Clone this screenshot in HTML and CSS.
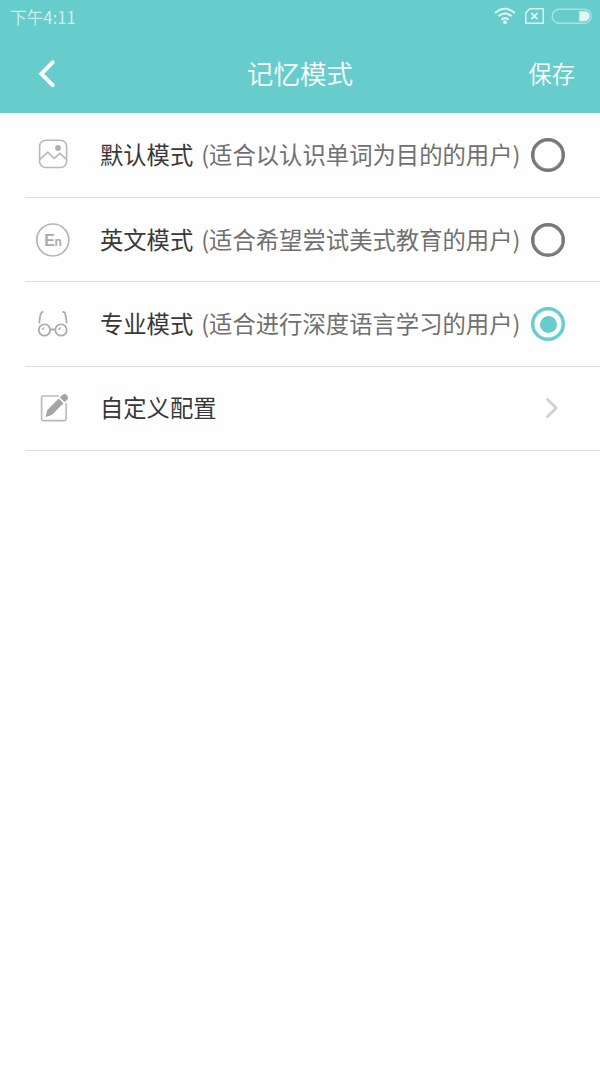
FILE: index.html
```html
<!DOCTYPE html>
<html lang="zh-CN">
<head>
<meta charset="utf-8">
<title>记忆模式</title>
<link rel="stylesheet" href="styles.css">
</head>
<body>
<header class="header">
  <div class="status">
    <span class="time">下午4:11</span>
    <svg class="status-icons" width="100" height="20" viewBox="0 0 100 20" fill="none" stroke="#e0f5f4">
      <path d="M.1 6.2Q10 -2.2 19.9 6.2M3.4 9.5Q10 4 16.6 9.5M6.4 12.9Q10 9.8 13.6 12.9" transform="translate(0 2.8)" stroke-width="2"/>
      <circle cx="10" cy="18.2" r="1.9" fill="#e0f5f4" stroke="none"/>
      <path d="M34.8 4.8H48.2V19.2H30.8V8.7Z" stroke-width="1.4"/>
      <path d="M36.4 9.2l6 6M42.4 9.2l-6 6" stroke-width="1.8"/>
      <rect x="57.2" y="5.2" width="39" height="14" rx="7" stroke="#a9e2e0" stroke-width="1.4"/>
      <path d="M84.3 7.2h5.4a5 5 0 0 1 0 10h-5.4z" fill="#e0f5f4" stroke="none"/>
    </svg>
  </div>
  <div class="navbar">
    <svg class="back" width="20" height="30" viewBox="0 0 20 30" fill="none" stroke="#fff" stroke-width="4" stroke-linecap="round" stroke-linejoin="miter"><path d="M15.6 3.3L4.4 14.8L15.6 26.2"/></svg>
    <h1 class="title">记忆模式</h1>
    <span class="save">保存</span>
  </div>
</header>
<main class="list">
  <div class="row">
    <svg class="icon" width="36" height="36" viewBox="0 0 36 36" fill="none" stroke="#b8b8b8" stroke-width="1.6"><rect x="4.6" y="3.3" width="27" height="27.2" rx="6"/><path d="M5.1 22.3L12.8 15.2L19.2 21.3L24.9 16.4L31.1 22.2"/><circle cx="23" cy="11" r="2.9" fill="#b0b0b0" stroke="none"/></svg>
    <span class="name">默认模式</span><span class="desc">(适合以认识单词为目的的用户)</span>
    <span class="radio"></span>
  </div>
  <div class="row">
    <svg class="icon" width="36" height="36" viewBox="0 0 36 36"><circle cx="17.8" cy="18" r="16" fill="none" stroke="#b5b5b5" stroke-width="1.7"/><text class="en" x="9.2" y="23.6" font-size="16">E</text><text class="en" x="19.6" y="23.6" font-size="12">n</text></svg>
    <span class="name">英文模式</span><span class="desc">(适合希望尝试美式教育的用户)</span>
    <span class="radio"></span>
  </div>
  <div class="row">
    <svg class="icon" width="36" height="36" viewBox="0 0 36 36" fill="none" stroke="#adadad" stroke-width="1.8"><circle cx="9.5" cy="24" r="5.7"/><circle cx="26" cy="24" r="5.7"/><path d="M15.2 23.5H20.3M4.3 17.4Q4.8 9 6.6 6.3L8.4 5.7M31.6 17.4Q31.1 9 29.3 6.3L27.5 5.7"/><path d="M7.4 24Q7.4 22 9.5 21.9M23.9 24Q23.9 22 26 21.9" stroke-width="1.3"/></svg>
    <span class="name">专业模式</span><span class="desc">(适合进行深度语言学习的用户)</span>
    <span class="radio on"></span>
  </div>
  <div class="row">
    <svg class="icon" width="36" height="36" viewBox="0 0 36 36"><path d="M24 6H8.3Q6.6 6 6.6 7.7V29Q6.6 30.6 8.3 30.6H29.4Q31.1 30.6 31.1 29V13" fill="none" stroke="#bababa" stroke-width="1.6"/><path d="M10.6 26.9L12.2 20.2L23.7 8.5L28.5 13.2L16.8 24.9ZM24.8 7.4L27.2 5Q29.6 2.9 31.9 5.2Q34.2 7.5 32.1 9.8L29.6 12.1Z" fill="#a4a4a4"/></svg>
    <span class="name">自定义配置</span>
    <svg class="chevron" width="16" height="24" viewBox="0 0 16 24" fill="none" stroke="#d0d0d0" stroke-width="2.7" stroke-linecap="round"><path d="M3.4 3.2L12.2 12L3.4 20.8"/></svg>
  </div>
</main>
</body>
</html>
```
FILE: styles.css
```css
* { box-sizing: border-box; }
body {
  margin: 0;
  min-height: 1067px;
  background: #fefefe;
  font-family: "Noto Sans CJK SC", sans-serif;
  color: #333;
}
.header {
  height: 113px;
  background: #66cdcc;
  color: #fff;
}
.status {
  display: flex;
  justify-content: space-between;
  height: 35px;
  padding: 0 5px 0 10px;
}
.time {
  font-size: 16.7px;
  line-height: 34px;
  color: #ccefee;
}
.status-icons { margin-top: 4px; overflow: visible; }
.navbar {
  display: grid;
  grid-template-columns: 100px 1fr 100px;
  align-items: center;
  height: 78px;
}
.back { margin-left: 37px; }
.title {
  margin: 0;
  padding-bottom: 2px;
  font-size: 26.6px;
  line-height: 40px;
  font-weight: 350;
  text-align: center;
}
.save {
  padding: 0 25px 2px 0;
  font-size: 23.3px;
  line-height: 36px;
  font-weight: 350;
  text-align: right;
}
.list { padding: 0.6px 0 0 25px; }
.row {
  display: flex;
  align-items: center;
  height: 84.4px;
  padding: 0 35px 0 10px;
  border-bottom: 1px solid #ddd;
  font-size: 23.3px;
  line-height: 36px;
  white-space: nowrap;
}
.icon { flex: none; margin-right: 29px; }
.en { font-family: "Liberation Sans", sans-serif; font-weight: 700; fill: #aaa; }
.name { padding-bottom: 2px; color: #383838; }
.desc { margin-left: 8px; padding-bottom: 2px; color: #707070; font-size: 23.35px; }
.radio {
  display: grid;
  place-items: center;
  flex: none;
  width: 34px;
  height: 34px;
  margin-left: auto;
  border: 3px solid #777;
  border-radius: 50%;
  box-shadow: inset 0 0 0 0.5px #777;
}
.radio.on { border-color: #66cdcc; box-shadow: inset 0 0 0 0.5px #66cdcc; }
.radio.on::after {
  content: "";
  width: 17px;
  height: 17px;
  border-radius: 50%;
  background: #66cdcc;
}
.chevron { margin: 0 5px 0 auto; }
```
